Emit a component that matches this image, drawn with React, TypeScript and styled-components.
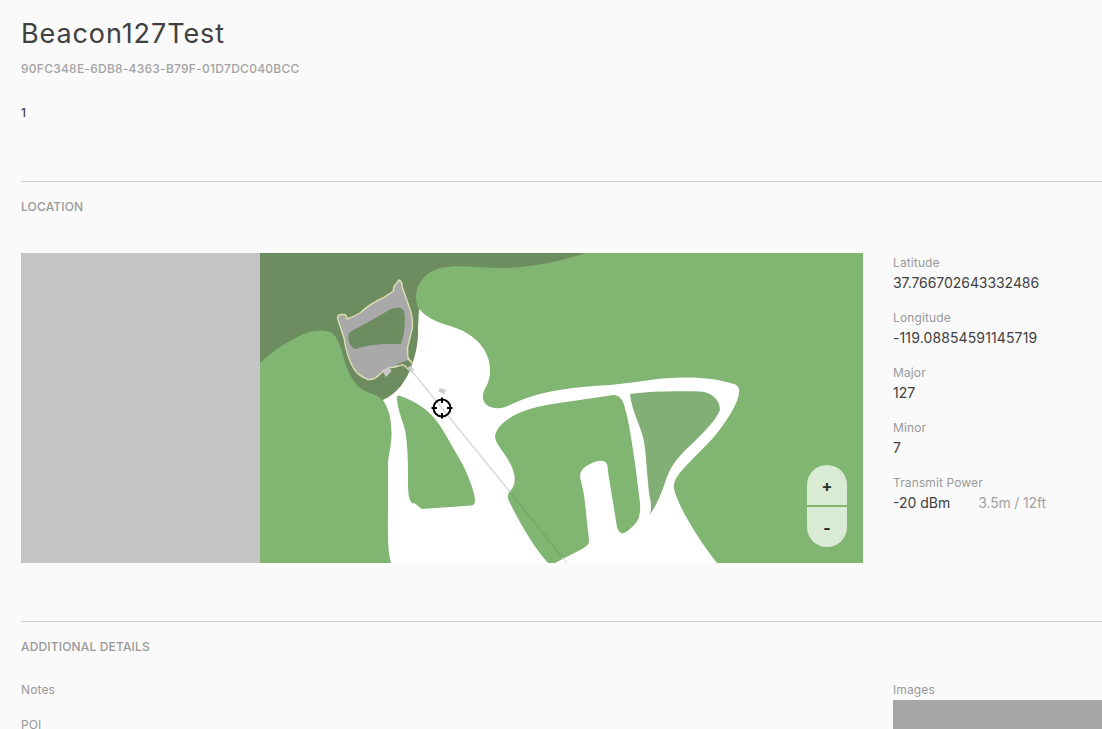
import React from "react";
import styled, { createGlobalStyle } from "styled-components";

const GlobalStyle = createGlobalStyle`
  * { box-sizing: border-box; }
  body {
    margin: 0;
    background: #fafafa;
    color: #404040;
    font-family: Inter, "Liberation Sans", sans-serif;
    overflow: hidden;
  }
`;

const Page = styled.main`
  height: 729px;
  padding-left: 21px;
  overflow: hidden;
`;

const Header = styled.header`
  height: 181px;
  padding-top: 17px;
`;

const Title = styled.h1`
  margin: 0;
  font-size: 27px;
  line-height: 34px;
  font-weight: 400;
  letter-spacing: 0.9px;
`;

const Uuid = styled.div`
  margin-top: 10px;
  font-size: 12px;
  line-height: 16px;
  font-weight: 500;
  letter-spacing: 0.25px;
  color: #a3a3a3;
`;

const Description = styled.p`
  margin: 28px 0 0;
  font-size: 12px;
  line-height: 16px;
  font-weight: 500;
`;

const Section = styled.section<{ $height?: number }>`
  height: ${(p) => (p.$height ? `${p.$height}px` : "auto")};
  border-top: 1px solid #cacbca;
  padding-top: 17px;
`;

const SectionTitle = styled.h2`
  margin: 0;
  font-size: 12px;
  line-height: 16px;
  font-weight: 500;
  letter-spacing: 0.16px;
  color: #999;
`;

const Columns = styled.div<{ $top: number }>`
  display: grid;
  grid-template-columns: 842px 1fr;
  column-gap: 30px;
  margin-top: ${(p) => p.$top}px;
`;

const MapFrame = styled.div`
  position: relative;
  height: 310px;
  background: #c4c4c4;

  > svg { display: block; }
`;

const ZoomControls = styled.div`
  position: absolute;
  right: 16px;
  bottom: 16px;
  display: flex;
  flex-direction: column;
  gap: 2px;
  width: 40px;
  height: 82px;
  border-radius: 20px;
  overflow: hidden;
`;

const ZoomButton = styled.button`
  flex: 1;
  border: 0;
  padding: 1px 0 0;
  background: #d9ead5;
  color: #263022;
  font: 700 16px/20px Inter, sans-serif;
`;

const Fields = styled.dl`
  margin: 0;
  padding-top: 1px;
`;

const Field = styled.div`
  height: 55px;
`;

const Label = styled.dt`
  font-size: 12px;
  line-height: 18px;
  letter-spacing: 0.12px;
  color: #999;
`;

const Value = styled.dd<{ $spacing?: number }>`
  display: flex;
  gap: 28px;
  margin: 0;
  font-size: 14px;
  line-height: 22px;
  letter-spacing: ${(p) => p.$spacing ?? 0}px;
`;

const Muted = styled.span`
  color: #a3a3a3;
  letter-spacing: -0.16px;
`;

const Note = styled.div`
  height: 35px;
`;

const ImageBox = styled.div`
  height: 200px;
  margin-top: 1px;
  background: #a6a6a6;
`;

const fields = [
  { label: "Latitude", value: "37.766702643332486", spacing: -0.06 },
  { label: "Longitude", value: "-119.08854591145719", spacing: 0.12 },
  { label: "Major", value: "127" },
  { label: "Minor", value: "7" },
  { label: "Transmit Power", value: "-20 dBm", extra: "3.5m / 12ft" },
];

function BeaconMap() {
  return (
    <svg width="842" height="310" viewBox="21 253 842 310">
      <rect x="260" y="253" width="603" height="310" fill="#80b572" />
      <path
        fill="#6d8c5f"
        d="M260 253H586C558 262 534 267 505 268C480 268 458 264 440 268C423 273 416 286 416 297Q416 304 419 309L425 345L405 390L382 400Q378 395 370 393C358 389 352 381 347 368C341 350 339 336 330 332C319 329 308 331 297 337Q277 347 260 363Z"
      />
      <path
        fill="#fff"
        d="M419 309Q428 320 450 326C474 333 490 349 490 370C490 387 483 386 483 398C484 406 492 409 501 408C508 407 514 402 530 397C550 390 575 387 610 385C635 383 655 378 680 377.500C702 377 718 379 734 384Q741 386 738.500 396C736 407 724 425 713 438C702 450 694 457 685 467Q672 480 674 489C678 505 695 535 717 563H391C387 548 388 530 388 505V465C388 455 392 445 391.500 432Q391 411 383 400C397 394 407 380 412 365Q419 345 418 328Z"
      />
      <path
        fill="#80b572"
        d="M573 401L610 395.500Q619 393 623 402C628 415 632 442 635 463L640 503Q641 517 636 523Q627 533 622 533.500Q617 532 616 521L608 472Q608 461 603 461Q598 460 590 464Q580 468 580 477C582 486 584 492 585 503L589 540Q590 545 582 549L555 563H548C533 546 519 522 508 499Q507 494 511 490C516 484 516 476 511 465C504 451 495 444 495 436C497 424 513 414 530 409Q542 405 573 401Z"
      />
      <path
        fill="#82af76"
        d="M630 394C650 391 678 391 700 391.500C712 392 720 400 720 410C716 420 705 431 693 443C682 453 672 463 667 477Q657 507 649 515Q652 511 650.500 501C647 485 647 457 643.500 439C640 424 632 412 630 394Z"
      />
      <path
        fill="#80b572"
        d="M397 397Q397 394 403 397C421 404 433 413 444 432L463 465Q475 491 475 501Q475 505 471 505.500L422 509Q419 507 415 503.500Q412 504 411 502Q408 498 408 485C408 462 408 446 405 430C402 418 397 409 397 397Z"
      />
      <path
        fill="#aaa9aa"
        stroke="#dddfb0"
        strokeWidth="1.400"
        strokeLinejoin="round"
        d="M337.500 318Q337 314.500 342 314.500Q347 314 347 319Q353 317 360 313Q371 303 383 298L393.500 291Q393 286 396 284L399 280Q402 281 402.500 288L410 309Q413 319 412.500 327L409 342L407.500 348L408 359L412 363L409 370L405 366Q401 364 395 367C388 367 384 370 380 374Q375 380 368 379.500Q359 376 354 369C348 359 345 345 344 338Z"
      />
      <path
        fill="#6d8c5f"
        d="M350 332L363 325L391 309Q401 305 404 311Q406 320 403.500 335L401 344L384 344Q366 345 356 349Q352 349 349 342Q347 335 350 332Z"
      />
      <path d="M395 365L408 360L412 364L409 369Q403 364 395 365Z" fill="#6d8c5f" />
      <path d="M401 364.500Q405 364 409 370M408 357L413 364" fill="none" stroke="#dddfb0" />
      <path d="M382 370L389 367L391.500 371L388 375L386 377L384 374Z" fill="#c6c8c8" />
      <path d="M408 367L411 366L414 370L411 373Z" fill="#c6c9c5" />
      <path d="M411 370L510 492" stroke="#dcdcdc" strokeWidth="1.700" />
      <path d="M510 492L562 557" stroke="#72a565" strokeWidth="1.300" opacity=".8" />
      <path d="M562 557L567 563" stroke="#ccc" />
      <path d="M440 388L446 390L444 394L438 391Z" fill="#cbcbcb" />
      <g fill="none" stroke="#000" strokeWidth="2">
        <circle cx="442" cy="408" r="8.500" />
        <path d="M442 397.500V403M442 413V418.500M431.500 408H437M447 408H452.500" />
      </g>
    </svg>
  );
}

export default function App() {
  return (
    <Page>
      <GlobalStyle />
      <Header>
        <Title>Beacon127Test</Title>
        <Uuid>90FC348E-6DB8-4363-B79F-01D7DC040BCC</Uuid>
        <Description>1</Description>
      </Header>
      <Section $height={440}>
        <SectionTitle>LOCATION</SectionTitle>
        <Columns $top={38}>
          <MapFrame>
            <BeaconMap />
            <ZoomControls>
              <ZoomButton>+</ZoomButton>
              <ZoomButton>-</ZoomButton>
            </ZoomControls>
          </MapFrame>
          <Fields>
            {fields.map((f) => (
              <Field key={f.label}>
                <Label>{f.label}</Label>
                <Value $spacing={f.spacing}>
                  {f.value}
                  {f.extra && <Muted>{f.extra}</Muted>}
                </Value>
              </Field>
            ))}
          </Fields>
        </Columns>
      </Section>
      <Section>
        <SectionTitle>ADDITIONAL DETAILS</SectionTitle>
        <Columns $top={26}>
          <div>
            <Note>
              <Label as="div">Notes</Label>
            </Note>
            <Note>
              <Label as="div">POI</Label>
            </Note>
          </div>
          <div>
            <Label as="div">Images</Label>
            <ImageBox />
          </div>
        </Columns>
      </Section>
    </Page>
  );
}
